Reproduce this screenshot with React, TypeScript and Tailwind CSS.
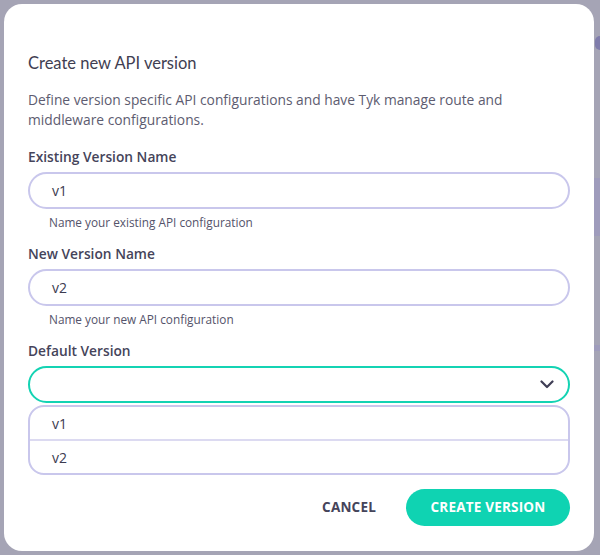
import React from "react";

const Field = ({ label, value, helper }: { label: string; value: string; helper: string }) => (
  <div className="flex flex-col">
    <div className="text-[13.75px] leading-[20px] font-semibold text-[#45445a]">{label}</div>
    <div className="mt-[5px] h-[37px] rounded-full border-2 border-[#c9c7ec] flex items-center pl-[22px] text-[14px] text-[#3c3b50]">
      {value}
    </div>
    <div className="mt-[5px] pl-[21px] text-[11.8px] leading-[16px] text-[#54536a]">{helper}</div>
  </div>
);

export default function App() {
  return (
    <div
      className="w-[600px] h-[555px] bg-[#a5a4b5] pt-[4px] pl-[4px] flex relative overflow-hidden"
      style={{ fontFamily: '"Open Sans", "Noto Sans", sans-serif' }}
    >
      <div className="absolute right-0 top-[178px] w-[6px] h-[58px] bg-[#9f9cbc]" />
      <div className="absolute right-0 top-[345px] w-[6px] h-[6px] bg-[#9f9cbc]" />
      <div className="absolute right-[-5px] top-[36px] w-[10px] h-[14px] rounded-full bg-[#7f7cab]" />
      <div className="w-[590px] h-[547px] bg-white rounded-[18px] pt-[47px] px-[24px] pb-[25px] flex flex-col relative z-10">
        <div
          className="text-[16.5px] leading-[24px] text-[#3f3e52]"
          style={{ fontFamily: 'Lato, "Noto Sans", sans-serif' }}
        >
          Create new API version
        </div>
        <div className="mt-[15px] text-[13.8px] leading-[20px] text-[#5d5c70]">
          Define version specific API configurations and have Tyk manage route and middleware configurations.
        </div>
        <div className="mt-[17px] flex flex-col gap-[14px]">
          <Field label="Existing Version Name" value="v1" helper="Name your existing API configuration" />
          <Field label="New Version Name" value="v2" helper="Name your new API configuration" />
        </div>
        <div className="mt-[14px] flex flex-col">
          <div className="text-[13.75px] leading-[20px] font-semibold text-[#45445a]">Default Version</div>
          <div className="mt-[5px] h-[37px] rounded-full border-2 border-[#14d3b3] flex items-center justify-end pr-[14px]">
            <svg width="14" height="9" viewBox="0 0 14 9" fill="none">
              <path d="M1.5 1.5L7 7L12.5 1.5" stroke="#3f3e55" strokeWidth="2.2" strokeLinecap="round" strokeLinejoin="round" />
            </svg>
          </div>
          <div className="mt-[2px] h-[70px] rounded-[16px] border-2 border-[#c9c7ec] flex flex-col overflow-hidden">
            <div className="flex-1 flex items-center pl-[22px] text-[14px] text-[#3c3b50] border-b-2 border-[#dcdaf1]">v1</div>
            <div className="flex-1 flex items-center pl-[22px] text-[14px] text-[#3c3b50]">v2</div>
          </div>
        </div>
        <div className="mt-auto flex items-center justify-end gap-[30px]">
          <div className="text-[13.5px] font-bold text-[#45445a] tracking-[0.2px]">CANCEL</div>
          <div className="h-[37px] w-[164px] rounded-full bg-[#0fd3b2] flex items-center justify-center text-[13.5px] font-bold text-white tracking-[0.2px]">
            CREATE VERSION
          </div>
        </div>
      </div>
    </div>
  );
}
